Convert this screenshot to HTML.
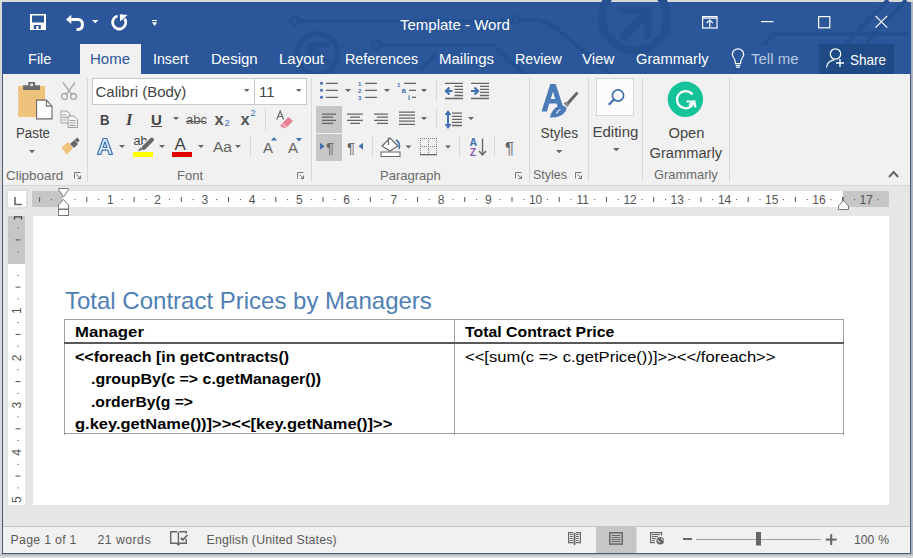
<!DOCTYPE html>
<html><head><meta charset="utf-8">
<style>
*{margin:0;padding:0;box-sizing:border-box}
html,body{width:913px;height:558px;overflow:hidden;background:#d8d8d8;font-family:"Liberation Sans",sans-serif}
.a{position:absolute}
.t{position:absolute;white-space:nowrap;line-height:1;transform-origin:0 0}
svg{position:absolute;overflow:visible}
</style></head><body>
<!-- window -->
<div class="a" style="left:911px;top:2px;width:2px;height:552px;background:linear-gradient(90deg,#a4afc2,#b6b9be)"></div>
<div class="a" style="left:0;top:554px;width:913px;height:4px;background:linear-gradient(#aeb0b2,#c6c8c8 35%,#d8dad8 70%,#e0e2e0)"></div>
<div class="a" style="left:2px;top:2px;width:909px;height:552px;background:#e6e6e6;border:1px solid #485a7a;border-top:none"></div>
<!-- title bar + tabs -->
<div class="a" id="tb" style="left:2px;top:2px;width:909px;height:72px;background:#2b579a;overflow:hidden"></div>
<!-- ribbon -->
<div class="a" style="left:3px;top:74px;width:907px;height:112px;background:#f1f1f1;border-bottom:1px solid #d5d5d5"></div>
<!-- status bar -->
<div class="a" style="left:3px;top:526px;width:907px;height:27px;background:#f1f1f1;border-top:1px solid #c6c6c6"></div>
<!-- page -->
<div class="a" style="left:33px;top:216px;width:856px;height:289px;background:#fff"></div>

<div id="title">
<svg style="left:0;top:0;overflow:hidden" width="913" height="74" viewBox="0 0 913 74">
 <g fill="none" stroke="#24508f" stroke-width="4">
  <circle cx="294.9" cy="20.9" r="4" stroke-width="3"/>
  <path d="M299 20.9H512"/>
  <circle cx="515.7" cy="19.8" r="3.5" stroke-width="3"/>
  <path d="M519 19.8H533Q546 20 558 30L604 68L612 76"/>
  <circle cx="376.4" cy="44.9" r="4" stroke-width="3"/>
  <path d="M380.5 44.9H493L526 76"/>
  <path d="M420 70L436 53"/>
  <circle cx="317.7" cy="54" r="20.5" stroke-width="5"/>
  <path d="M310 66V45H330M310 45L328 63" stroke-width="5"/>
  <circle cx="634.6" cy="17.8" r="32.8" stroke-width="8"/>
  <path d="M622 38L646 14" stroke-width="8"/>
  <path d="M619.7 10.8H648V38.8" stroke-width="7"/>
  <path d="M764 45L773 33.8H908M846.5 43L888 0M866 43L906 0"/>
 </g>
</svg>
<!-- save -->
<svg style="left:30px;top:14px" width="16" height="16" viewBox="0 0 16 16">
 <path fill="#fff" fill-rule="evenodd" d="M0 0H16V16H0Z M2 1.5V8.5H14V1.5Z M3.8 11V15H6.3V12H8.5V15H10.8V11Z"/>
</svg>
<!-- undo -->
<svg style="left:64px;top:13px" width="24" height="18" viewBox="0 0 24 18">
 <path d="M3.5 6.4H14.3A5.2 5.2 0 0 1 14.3 16.6H12.5" fill="none" stroke="#fff" stroke-width="3"/>
 <path d="M2 6.4L7.3 1.8V11Z" fill="#fff"/>
</svg>
<svg style="left:92px;top:20px" width="7" height="4" viewBox="0 0 7 4"><path d="M0 0H6.5L3.25 3.2Z" fill="#fff"/></svg>
<!-- redo -->
<svg style="left:108px;top:12px" width="22" height="22" viewBox="0 0 22 22">
 <path d="M9.49 4.02A6.6 6.6 0 1 0 16.61 6.61" fill="none" stroke="#fff" stroke-width="2.8"/>
 <path d="M11.8 2.3L19.6 3.1L12.2 9.5Z" fill="#fff"/>
</svg>
<!-- customize -->
<svg style="left:152px;top:20px" width="6" height="7" viewBox="0 0 6 7"><rect x="0" y="0" width="5" height="1" fill="#fff"/><path d="M0 2.2H5.2L2.6 6Z" fill="#fff"/></svg>
<div class="t" style="left:400px;top:17px;font-size:15px;color:#fff">Template - Word</div>
<!-- ribbon display options -->
<svg style="left:702px;top:16px" width="16" height="13" viewBox="0 0 16 13">
 <g fill="none" stroke="#fff" stroke-width="1.2"><rect x="0.6" y="0.6" width="14.4" height="11.4"/><path d="M0.6 2.2H15M7.8 4.5V11.5M4.6 7.2L7.8 4L11 7.2"/></g>
</svg>
<svg style="left:761px;top:21px" width="13" height="2"><path d="M0 0.6H12.5" stroke="#fff" stroke-width="1.2"/></svg>
<svg style="left:818px;top:16px" width="13" height="13"><rect x="0.6" y="0.6" width="11.2" height="11.2" fill="none" stroke="#fff" stroke-width="1.2"/></svg>
<svg style="left:875px;top:15px" width="14" height="14"><path d="M0.5 0.8L12.2 12.6M12.2 0.8L0.5 12.6" stroke="#fff" stroke-width="1.2"/></svg>
</div>

<div id="tabs">
<div class="a" style="left:80px;top:44px;width:61px;height:31px;background:#f1f1f1"></div>
<div class="t" style="left:28px;top:51.1px;font-size:15px;transform:scaleX(0.97);color:#fff">File</div>
<div class="t" style="left:90px;top:51.1px;font-size:15px;color:#2b579a">Home</div>
<div class="t" style="left:153px;top:51.1px;font-size:15px;transform:scaleX(0.946);color:#fff">Insert</div>
<div class="t" style="left:211px;top:51.1px;font-size:15px;color:#fff">Design</div>
<div class="t" style="left:279px;top:51.1px;font-size:15px;color:#fff">Layout</div>
<div class="t" style="left:345px;top:51.1px;font-size:15px;transform:scaleX(0.954);color:#fff">References</div>
<div class="t" style="left:439px;top:51.1px;font-size:15px;color:#fff">Mailings</div>
<div class="t" style="left:515px;top:51.1px;font-size:15px;transform:scaleX(0.95);color:#fff">Review</div>
<div class="t" style="left:582px;top:51.1px;font-size:15px;color:#fff">View</div>
<div class="t" style="left:636px;top:51.1px;font-size:15px;transform:scaleX(0.977);color:#fff">Grammarly</div>
<div class="t" style="left:751px;top:51.1px;font-size:15px;color:#b9c9e1">Tell me</div>
<div class="a" style="left:819px;top:44px;width:75px;height:30px;background:#1f4a85"></div>
<div class="t" style="left:849.5px;top:52px;font-size:15px;transform:scaleX(0.9);color:#fff">Share</div>
<svg style="left:824px;top:46px" width="24" height="24" viewBox="824 46 24 24">
 <circle cx="835.5" cy="54" r="5.2" fill="none" stroke="#fff" stroke-width="1.3"/>
 <path d="M826.5 67.5Q827.5 60.5 834.5 59.8" fill="none" stroke="#fff" stroke-width="1.3"/>
 <path d="M840 59V67M836 63H844" stroke="#fff" stroke-width="1.3"/>
</svg>
<svg style="left:731px;top:50px" width="15" height="19" viewBox="731 50 15 19">
 <path d="M735.5 63.5Q735.5 60 733.5 57.5Q732.3 55.8 732.3 54.5A5.7 5.7 0 0 1 743.7 54.5Q743.7 55.8 742.5 57.5Q740.5 60 740.5 63.5Z" fill="none" stroke="#fff" stroke-width="1.2"/>
 <path d="M735.5 65.3H740.5M736 67.2H740" stroke="#fff" stroke-width="1.2"/>
</svg>
</div>


<div id="ribbon">
<!-- separators -->
<div class="a" style="left:87px;top:78px;width:1px;height:104px;background:#d8d8d8"></div>
<div class="a" style="left:311px;top:78px;width:1px;height:104px;background:#d8d8d8"></div>
<div class="a" style="left:529px;top:78px;width:1px;height:104px;background:#d8d8d8"></div>
<div class="a" style="left:588px;top:78px;width:1px;height:104px;background:#d8d8d8"></div>
<div class="a" style="left:642px;top:78px;width:1px;height:104px;background:#d8d8d8"></div>
<div class="a" style="left:729px;top:78px;width:1px;height:104px;background:#d8d8d8"></div>
<!-- group labels -->
<div class="t" style="left:6px;top:169px;font-size:13.4px;color:#6a6a6a">Clipboard</div>
<div class="t" style="left:177px;top:169px;font-size:13px;color:#6a6a6a">Font</div>
<div class="t" style="left:380px;top:169px;font-size:13px;color:#6a6a6a">Paragraph</div>
<div class="t" style="left:533px;top:169px;font-size:12.5px;color:#6a6a6a">Styles</div>
<div class="t" style="left:654px;top:169px;font-size:12.9px;color:#6a6a6a">Grammarly</div>
<!-- launchers -->
<svg style="left:74px;top:172px" width="8" height="7" viewBox="0 0 8 7"><g fill="none" stroke="#777" stroke-width="1"><path d="M0.5 6.5V0.5H6.5"/><path d="M2.5 2.5L6.5 6.5M3.5 6.5H6.5V3.5"/></g></svg>
<svg style="left:297px;top:172px" width="8" height="7" viewBox="0 0 8 7"><g fill="none" stroke="#777" stroke-width="1"><path d="M0.5 6.5V0.5H6.5"/><path d="M2.5 2.5L6.5 6.5M3.5 6.5H6.5V3.5"/></g></svg>
<svg style="left:515px;top:172px" width="8" height="7" viewBox="0 0 8 7"><g fill="none" stroke="#777" stroke-width="1"><path d="M0.5 6.5V0.5H6.5"/><path d="M2.5 2.5L6.5 6.5M3.5 6.5H6.5V3.5"/></g></svg>
<svg style="left:575px;top:172px" width="8" height="7" viewBox="0 0 8 7"><g fill="none" stroke="#777" stroke-width="1"><path d="M0.5 6.5V0.5H6.5"/><path d="M2.5 2.5L6.5 6.5M3.5 6.5H6.5V3.5"/></g></svg>
<svg style="left:888px;top:170px" width="12" height="8" viewBox="0 0 12 8"><path d="M1 7L5.6 2L10.2 7" fill="none" stroke="#666" stroke-width="2"/></svg>

<!-- Clipboard -->
<svg style="left:17px;top:81px" width="36" height="39" viewBox="0 0 36 39">
 <path d="M1.2 5H28V36H1.2Z" fill="#eec27a"/>
 <path d="M6 4.3H23V9H6Z" fill="#6b6b6b"/>
 <path d="M11.3 1H18.1V5H11.3Z" fill="#6b6b6b"/>
 <rect x="13.3" y="2.6" width="2.6" height="2.6" fill="#f1f1f1"/>
 <path d="M19.6 19.1H29.4L35 25.1V37.9H19.6Z" fill="#fff" stroke="#6b6b6b" stroke-width="1.1"/>
 <path d="M29.4 19.1V25.1H35" fill="none" stroke="#6b6b6b" stroke-width="1.1"/>
</svg>
<div class="t" style="left:15.5px;top:126px;font-size:14px;transform:scaleX(0.95);color:#444">Paste</div>
<svg style="left:29px;top:150px" width="7" height="4"><path d="M0 0H6L3 3.2Z" fill="#666"/></svg>
<!-- cut -->
<svg style="left:60px;top:82px" width="18" height="19" viewBox="0 0 18 19">
 <g fill="none" stroke="#a6a6a6" stroke-width="1.3"><path d="M3 0.5L12 12.8M15 0.5L6 12.8"/><circle cx="4.5" cy="14.4" r="2.9"/><circle cx="13.5" cy="14.4" r="2.9"/></g>
</svg>
<!-- copy -->
<svg style="left:60px;top:110px" width="19" height="19" viewBox="0 0 19 19">
 <g fill="#f1f1f1" stroke="#a0a0a0" stroke-width="1"><path d="M1 1H7L10 4V13H1Z"/><path d="M8 6H14L17.5 9.5V17.5H8Z"/></g>
 <g stroke="#a0a0a0" stroke-width="1"><path d="M2.5 5H6M2.5 7.5H7.5M2.5 10H6.5M9.5 10.5H15.5M9.5 13H15.5M9.5 15.5H15.5"/></g>
</svg>
<!-- format painter -->
<svg style="left:61px;top:138px" width="19" height="18" viewBox="0 0 19 18">
 <path d="M0.5 9.5L7 4L12 10.5L5.5 16.5Z" fill="#eec27a"/>
 <path d="M9 6L13.5 2L17 6L13 10Z" fill="#666"/>
 <path d="M13.6 1.8L16.4 -0.6L18.6 2.6L16.6 4.6Z" fill="#666"/>
</svg>

<!-- Font group -->
<div class="a" style="left:92px;top:78px;width:215px;height:27px;background:#fff;border:1px solid #c8c8c8"></div>
<div class="a" style="left:254px;top:78px;width:1px;height:27px;background:#c8c8c8"></div>
<div class="t" style="left:95.5px;top:84px;font-size:15px;color:#444">Calibri (Body)</div>
<div class="t" style="left:259px;top:84px;font-size:15px;color:#444">11</div>
<svg style="left:244px;top:89px" width="6" height="4"><path d="M0 0H5.5L2.75 3Z" fill="#666"/></svg>
<svg style="left:296px;top:89px" width="6" height="4"><path d="M0 0H5.5L2.75 3Z" fill="#666"/></svg>
<div class="t" style="left:99.5px;top:112px;font-size:15.5px;transform:scaleX(0.85);font-weight:bold;color:#444">B</div>
<div class="t" style="left:126px;top:111.5px;font-size:16.5px;font-style:italic;font-family:'Liberation Serif',serif;font-weight:bold;color:#444">I</div>
<div class="t" style="left:151px;top:112px;font-size:15px;font-weight:bold;color:#444">U</div>
<div class="a" style="left:151px;top:126px;width:11px;height:1.3px;background:#444"></div>
<svg style="left:173px;top:117px" width="7" height="4"><path d="M0 0H6L3 3Z" fill="#666"/></svg>
<div class="t" style="left:186px;top:113px;font-size:13px;color:#555">abc</div>
<div class="a" style="left:186px;top:121px;width:20px;height:1.2px;background:#555"></div>
<div class="t" style="left:214.5px;top:110.5px;font-size:16.5px;font-weight:bold;color:#555">x</div>
<div class="t" style="left:224.5px;top:119px;font-size:9px;color:#3f70b0">2</div>
<div class="t" style="left:240.5px;top:110.5px;font-size:16.5px;font-weight:bold;color:#555">x</div>
<div class="t" style="left:250.5px;top:109px;font-size:9px;color:#3f70b0">2</div>
<div class="a" style="left:265px;top:108px;width:1px;height:22px;background:#d8d8d8"></div>
<svg style="left:276px;top:110px" width="18" height="19" viewBox="0 0 18 19">
 <path d="M0.8 9.5L4.2 1L7.6 9.5M2 6.5H6.4" fill="none" stroke="#666" stroke-width="1.2"/>
 <path d="M6.5 13L12.5 7L17 11L11 17Z" fill="#e77e92"/>
 <path d="M4 16L6.5 13L11 17L9 18.6Z" fill="#e77e92"/>
 <path d="M5.8 13.6L10.6 17.6" stroke="#f1f1f1" stroke-width="1"/>
</svg>
<!-- row 3 -->
<svg style="left:96px;top:137px" width="18" height="19" viewBox="0 0 18 19">
 <path d="M1.5 17.3L7.2 1.5H10.8L16.5 17.3H13.2L11.8 13.2H6.2L4.8 17.3Z M7.1 10.4H10.9L9 4.8Z" fill="#e4eef9" stroke="#3b73b9" stroke-width="1.2" stroke-linejoin="round"/>
</svg>
<svg style="left:119px;top:145px" width="7" height="4"><path d="M0 0H6L3 3Z" fill="#666"/></svg>
<div class="t" style="left:133.5px;top:135px;font-size:12.5px;color:#444">ab</div>
<svg style="left:136px;top:138px" width="17" height="15" viewBox="136 138 17 15"><path d="M143.5 148L151.8 139.8" stroke="#f1f1f1" stroke-width="6.5"/><path d="M143.8 147.7L151.8 139.8" stroke="#666" stroke-width="4.2" stroke-linecap="round"/><path d="M137.5 151.5L140.5 147.5L142.8 149.6Z" fill="#666"/></svg>
<div class="a" style="left:133px;top:152px;width:20px;height:5px;background:#ffff00"></div>
<svg style="left:159px;top:145px" width="7" height="4"><path d="M0 0H6L3 3Z" fill="#666"/></svg>
<div class="t" style="left:174.5px;top:136px;font-size:17px;color:#444">A</div>
<div class="a" style="left:172px;top:152px;width:20px;height:5px;background:#e00000"></div>
<svg style="left:198px;top:145px" width="7" height="4"><path d="M0 0H6L3 3Z" fill="#666"/></svg>
<div class="t" style="left:213px;top:139px;font-size:15.5px;color:#666">Aa</div>
<svg style="left:235px;top:145px" width="7" height="4"><path d="M0 0H6L3 3Z" fill="#666"/></svg>
<div class="a" style="left:250px;top:136px;width:1px;height:22px;background:#d8d8d8"></div>
<div class="t" style="left:263px;top:140px;font-size:15px;color:#666">A</div>
<svg style="left:271px;top:137px" width="7" height="4"><path d="M0 3.5L3 0L6 3.5Z" fill="#3f70b0"/></svg>
<div class="t" style="left:288px;top:140px;font-size:15px;color:#666">A</div>
<svg style="left:296px;top:138px" width="7" height="4"><path d="M0 0H6L3 3.5Z" fill="#3f70b0"/></svg>

<!-- Paragraph group -->
<svg style="left:316px;top:80px" width="200" height="80" viewBox="316 80 200 80">
 <g fill="#3f70b0"><circle cx="321.5" cy="83.3" r="1.5"/><circle cx="321.5" cy="90.3" r="1.5"/><circle cx="321.5" cy="97.3" r="1.5"/></g>
 <g stroke="#666" stroke-width="1.3"><path d="M326 83.3H338M326 90.3H338M326 97.3H338"/>
 <path d="M365 83.3H377M365 90.3H377M365 97.3H377"/>
 <path d="M404 83.3H416M409 90.3H416M412 97.3H416"/></g>
 <g fill="#3f70b0" font-family="Liberation Sans" font-size="6" font-weight="bold"><text x="358" y="86">1</text><text x="358" y="93">2</text><text x="358" y="100">3</text>
 <text x="397" y="87">1</text><text x="401.5" y="93" font-size="8">a</text><text x="408" y="100" font-size="7">i</text></g>
 <g fill="#666"><path d="M345 89H351L348 92Z M384 89H390L387 92Z M421 89H427L424 92Z"/></g>
 <!-- indent -->
 <g stroke="#666" stroke-width="1.3"><path d="M445 83.4H463M454.5 86.4H463M454.5 89.4H463M454.5 92.4H463M454.5 95.5H463M445 98.5H463"/>
 <path d="M471 83.4H489M480 86.4H489M480 89.4H489M480 92.4H489M480 95.5H489M471 98.5H489"/></g>
 <g fill="none" stroke="#3f70b0" stroke-width="2.2"><path d="M452.5 91H446.5M449.5 87.5L446 91L449.5 94.5"/><path d="M471 91H477.5M474.5 87.5L478 91L474.5 94.5"/></g>
 <!-- align -->
 <rect x="316" y="106" width="26" height="27" fill="#c6c6c6"/>
 <rect x="316" y="134" width="26" height="27" fill="#c6c6c6"/>
 <g stroke="#666" stroke-width="1.3"><path d="M322 114.1H336M322 117.1H333M322 120.3H336M322 123.3H333"/>
 <path d="M347 114.1H363M350 117.1H360M347 120.3H363M350 123.3H360"/>
 <path d="M374 114.1H388M377 117.1H388M374 120.3H388M377 123.3H388"/>
 <path d="M399 112.1H415M399 115.1H415M399 118.1H415M399 121.1H415M399 124.3H415"/>
 <path d="M452 113.2H462M452 116.3H462M452 119.4H462M452 122.3H462M452 125.5H462"/></g>
 <g fill="#666"><path d="M421 117H427L424 120Z M468 117H474L471 120Z"/></g>
 <g fill="none" stroke="#3f70b0" stroke-width="2"><path d="M448 112V127"/></g>
 <g fill="#3f70b0"><path d="M444.5 115L448 110L451.5 115Z M444.5 124L448 129L451.5 124Z"/></g>
 <!-- row3 -->
 <path d="M320 142.8L324.5 146.3L320 149.8Z" fill="#3f70b0"/>
 <path d="M363 142.8L358.5 146.3L363 149.8Z" fill="#3f70b0"/>
 <g fill="#666" font-family="Liberation Sans" font-size="15"><text x="326" y="152.5">¶</text><text x="347" y="152.5">¶</text><text x="505" y="154" font-size="17">¶</text></g>
 <rect x="372" y="136" width="1" height="21" fill="#d8d8d8"/>
 <rect x="436" y="80" width="1" height="21" fill="#d8d8d8"/>
 <rect x="436" y="108" width="1" height="21" fill="#d8d8d8"/>
 <rect x="459" y="136" width="1" height="21" fill="#d8d8d8"/>
 <rect x="494" y="136" width="1" height="21" fill="#d8d8d8"/>
 <!-- shading -->
 <path d="M382 146L390 138L398 146L390 151Z" fill="#fff" stroke="#666" stroke-width="1.2"/>
 <path d="M388.5 137.5V145" stroke="#666" stroke-width="1.2"/>
 <path d="M396 140Q401 143 399 149" fill="none" stroke="#3f70b0" stroke-width="1.6"/>
 <rect x="381" y="152" width="19" height="4.5" fill="#fff" stroke="#666" stroke-width="1"/>
 <g fill="#666"><path d="M405.5 145.5H411.5L408.5 148.5Z M445 145.5H451L448 148.5Z"/></g>
 <!-- borders -->
 <g fill="#777"><rect x="420" y="138" width="1" height="1"/><rect x="420" y="146" width="1" height="1"/><rect x="422" y="138" width="1" height="1"/><rect x="422" y="146" width="1" height="1"/><rect x="424" y="138" width="1" height="1"/><rect x="424" y="146" width="1" height="1"/><rect x="426" y="138" width="1" height="1"/><rect x="426" y="146" width="1" height="1"/><rect x="428" y="138" width="1" height="1"/><rect x="428" y="146" width="1" height="1"/><rect x="430" y="138" width="1" height="1"/><rect x="430" y="146" width="1" height="1"/><rect x="432" y="138" width="1" height="1"/><rect x="432" y="146" width="1" height="1"/><rect x="434" y="138" width="1" height="1"/><rect x="434" y="146" width="1" height="1"/><rect x="436" y="138" width="1" height="1"/><rect x="436" y="146" width="1" height="1"/><rect x="420" y="140" width="1" height="1"/><rect x="428" y="140" width="1" height="1"/><rect x="436" y="140" width="1" height="1"/><rect x="420" y="142" width="1" height="1"/><rect x="428" y="142" width="1" height="1"/><rect x="436" y="142" width="1" height="1"/><rect x="420" y="144" width="1" height="1"/><rect x="428" y="144" width="1" height="1"/><rect x="436" y="144" width="1" height="1"/><rect x="420" y="146" width="1" height="1"/><rect x="428" y="146" width="1" height="1"/><rect x="436" y="146" width="1" height="1"/><rect x="420" y="148" width="1" height="1"/><rect x="428" y="148" width="1" height="1"/><rect x="436" y="148" width="1" height="1"/><rect x="420" y="150" width="1" height="1"/><rect x="428" y="150" width="1" height="1"/><rect x="436" y="150" width="1" height="1"/><rect x="420" y="152" width="1" height="1"/><rect x="428" y="152" width="1" height="1"/><rect x="436" y="152" width="1" height="1"/></g>
 <rect x="420" y="154" width="17" height="1.3" fill="#666"/>
 <!-- sort -->
 <g font-family="Liberation Sans" font-size="10.5" font-weight="bold"><text x="469.5" y="146.2" fill="#3f70b0">A</text><text x="469.8" y="155.8" fill="#8b5bb8">Z</text></g>
 <path d="M482.5 138.5V155M479 151L482.5 155L486 151" fill="none" stroke="#666" stroke-width="1.4"/>
</svg>
<!-- Styles -->
<svg style="left:540px;top:82px" width="40" height="37" viewBox="540 82 40 37">
 <path d="M541.5 111.5L550.3 84H555.7L563 106.5L558.5 108.8L556.6 103.5H549.2L547 111.5Z M550.7 99H555.3L553 91.5Z" fill="#4a7ab8"/>
 <path d="M566.5 102.5L576.5 91.5L578.5 93.5L568.7 104.8Z" fill="#666"/>
 <path d="M563.5 103.2L566.5 101.8L569.5 104.8L567.2 107Z" fill="#888"/>
 <path d="M550 117.5Q551.5 109 558.5 106Q563.5 104.5 566.5 107.8Q566.5 113 560 116Q555 117.8 550 117.5Z" fill="#4a7ab8"/>
 <path d="M556.5 113.5Q557.5 110.5 560.5 109.5" fill="none" stroke="#f1f1f1" stroke-width="1.3"/>
</svg>
<div class="t" style="left:540.5px;top:127px;font-size:13.8px;color:#444">Styles</div>
<svg style="left:555.5px;top:149.5px" width="7" height="4"><path d="M0 0H6.5L3.25 3.2Z" fill="#666"/></svg>
<!-- Editing -->
<div class="a" style="left:596px;top:78px;width:38px;height:38px;background:#fcfcfc;border:1px solid #d4d4d4"></div>
<svg style="left:606px;top:86px" width="20" height="20" viewBox="606 86 20 20"><circle cx="618" cy="95.5" r="5.6" fill="none" stroke="#3f70b0" stroke-width="1.7"/><path d="M614 99.5L608.8 104.7" stroke="#3f70b0" stroke-width="2.2"/></svg>
<div class="t" style="left:592.5px;top:123.5px;font-size:15px;color:#444">Editing</div>
<svg style="left:613px;top:147.5px" width="7" height="4"><path d="M0 0H6.5L3.25 3.2Z" fill="#666"/></svg>
<!-- Grammarly -->
<svg style="left:667px;top:81px" width="37" height="37" viewBox="0 0 37 37">
 <circle cx="18.4" cy="18.3" r="17.7" fill="#15c39a"/>
 <path d="M25.5 13.5A8.6 8.6 0 1 0 27 20.5H19.5" fill="none" stroke="#fff" stroke-width="2.2"/>
 <path d="M22 24L27.5 21L28.5 26.5" fill="none" stroke="#fff" stroke-width="2"/>
</svg>
<div class="t" style="left:668.5px;top:126px;font-size:14.7px;color:#444">Open</div>
<div class="t" style="left:649.5px;top:146px;font-size:14.7px;color:#444">Grammarly</div>
</div>

<div id="ruler">
<div class="a" style="left:6px;top:189px;width:22px;height:20px;background:#fff;border:2.5px solid #dedede"></div>
<svg style="left:14px;top:197px" width="9" height="9"><path d="M1 0V7.5H8" fill="none" stroke="#666" stroke-width="1.6"/></svg>
<div class="a" style="left:32px;top:191px;width:857px;height:16px;background:#fff"></div>
<div class="a" style="left:32px;top:191px;width:31px;height:16px;background:#c6c6c6"></div>
<div class="a" style="left:843px;top:191px;width:46px;height:16px;background:#c6c6c6"></div>
<svg style="left:0;top:186px" width="913" height="30" viewBox="0 186 913 30">
<g fill="#555">
<rect x="39.1" y="197" width="1" height="5"/>
<rect x="50.9" y="199" width="1" height="1.2"/>
<rect x="74.5" y="199" width="1" height="1.2"/>
<rect x="86.3" y="197" width="1" height="5"/>
<rect x="98.1" y="199" width="1" height="1.2"/>
<rect x="121.8" y="199" width="1" height="1.2"/>
<rect x="133.6" y="197" width="1" height="5"/>
<rect x="145.4" y="199" width="1" height="1.2"/>
<rect x="169.0" y="199" width="1" height="1.2"/>
<rect x="180.8" y="197" width="1" height="5"/>
<rect x="192.6" y="199" width="1" height="1.2"/>
<rect x="216.2" y="199" width="1" height="1.2"/>
<rect x="228.0" y="197" width="1" height="5"/>
<rect x="239.9" y="199" width="1" height="1.2"/>
<rect x="263.5" y="199" width="1" height="1.2"/>
<rect x="275.3" y="197" width="1" height="5"/>
<rect x="287.1" y="199" width="1" height="1.2"/>
<rect x="310.7" y="199" width="1" height="1.2"/>
<rect x="322.5" y="197" width="1" height="5"/>
<rect x="334.3" y="199" width="1" height="1.2"/>
<rect x="357.9" y="199" width="1" height="1.2"/>
<rect x="369.8" y="197" width="1" height="5"/>
<rect x="381.6" y="199" width="1" height="1.2"/>
<rect x="405.2" y="199" width="1" height="1.2"/>
<rect x="417.0" y="197" width="1" height="5"/>
<rect x="428.8" y="199" width="1" height="1.2"/>
<rect x="452.4" y="199" width="1" height="1.2"/>
<rect x="464.2" y="197" width="1" height="5"/>
<rect x="476.1" y="199" width="1" height="1.2"/>
<rect x="499.7" y="199" width="1" height="1.2"/>
<rect x="511.5" y="197" width="1" height="5"/>
<rect x="523.3" y="199" width="1" height="1.2"/>
<rect x="546.9" y="199" width="1" height="1.2"/>
<rect x="558.7" y="197" width="1" height="5"/>
<rect x="570.5" y="199" width="1" height="1.2"/>
<rect x="594.2" y="199" width="1" height="1.2"/>
<rect x="606.0" y="197" width="1" height="5"/>
<rect x="617.8" y="199" width="1" height="1.2"/>
<rect x="641.4" y="199" width="1" height="1.2"/>
<rect x="653.2" y="197" width="1" height="5"/>
<rect x="665.0" y="199" width="1" height="1.2"/>
<rect x="688.6" y="199" width="1" height="1.2"/>
<rect x="700.4" y="197" width="1" height="5"/>
<rect x="712.3" y="199" width="1" height="1.2"/>
<rect x="735.9" y="199" width="1" height="1.2"/>
<rect x="747.7" y="197" width="1" height="5"/>
<rect x="759.5" y="199" width="1" height="1.2"/>
<rect x="783.1" y="199" width="1" height="1.2"/>
<rect x="794.9" y="197" width="1" height="5"/>
<rect x="806.7" y="199" width="1" height="1.2"/>
<rect x="830.4" y="199" width="1" height="1.2"/>
<rect x="842.2" y="197" width="1" height="5"/>
<rect x="854.0" y="199" width="1" height="1.2"/>
<rect x="877.6" y="199" width="1" height="1.2"/>
</g>
<g fill="#555" font-family="Liberation Sans" font-size="12" text-anchor="middle">
<text x="110.4" y="203.5">1</text>
<text x="157.7" y="203.5">2</text>
<text x="204.9" y="203.5">3</text>
<text x="252.2" y="203.5">4</text>
<text x="299.4" y="203.5">5</text>
<text x="346.6" y="203.5">6</text>
<text x="393.9" y="203.5">7</text>
<text x="441.1" y="203.5">8</text>
<text x="488.4" y="203.5">9</text>
<text x="535.6" y="203.5">10</text>
<text x="582.8" y="203.5">11</text>
<text x="630.1" y="203.5">12</text>
<text x="677.3" y="203.5">13</text>
<text x="724.6" y="203.5">14</text>
<text x="771.8" y="203.5">15</text>
<text x="819.0" y="203.5">16</text>
<text x="866.3" y="203.5">17</text>
</g>
<g fill="#fff" stroke="#777" stroke-width="1"><path d="M58.5 188.5H68.5V189.5L63.5 197L58.5 189.5Z"/><path d="M63.5 199.5L68.5 205V209H58.5V205Z"/><rect x="58.5" y="209.5" width="10" height="6"/>
<path d="M843.5 200.5L848.5 206V209.5H838.5V206Z"/></g>
<rect x="842.5" y="197" width="1" height="3.5" fill="#555"/>
</svg>
<div class="a" style="left:8px;top:216px;width:17px;height:289px;background:#fff"></div>
<div class="a" style="left:8px;top:216px;width:17px;height:47.5px;background:#c6c6c6"></div>
<svg style="left:0;top:216px" width="33" height="289" viewBox="0 216 33 289">
<g fill="#555">
<rect x="17.5" y="227.6" width="1.2" height="1"/>
<rect x="15.5" y="239.4" width="5" height="1"/>
<rect x="17.5" y="251.2" width="1.2" height="1"/>
<rect x="17.5" y="274.8" width="1.2" height="1"/>
<rect x="15.5" y="286.6" width="5" height="1"/>
<rect x="17.5" y="298.4" width="1.2" height="1"/>
<rect x="17.5" y="322.1" width="1.2" height="1"/>
<rect x="15.5" y="333.9" width="5" height="1"/>
<rect x="17.5" y="345.7" width="1.2" height="1"/>
<rect x="17.5" y="369.3" width="1.2" height="1"/>
<rect x="15.5" y="381.1" width="5" height="1"/>
<rect x="17.5" y="392.9" width="1.2" height="1"/>
<rect x="17.5" y="416.5" width="1.2" height="1"/>
<rect x="15.5" y="428.3" width="5" height="1"/>
<rect x="17.5" y="440.1" width="1.2" height="1"/>
<rect x="17.5" y="463.8" width="1.2" height="1"/>
<rect x="15.5" y="475.6" width="5" height="1"/>
<rect x="17.5" y="487.4" width="1.2" height="1"/>
<path d="M14.5 219.5V216.8H21.5V219.5" fill="none" stroke="#444" stroke-width="1.2"/>
</g><g fill="#555" font-family="Liberation Sans" font-size="12" text-anchor="middle">
<text x="0" y="0" transform="translate(21 310.7) rotate(-90)">1</text>
<text x="0" y="0" transform="translate(21 358.0) rotate(-90)">2</text>
<text x="0" y="0" transform="translate(21 405.2) rotate(-90)">3</text>
<text x="0" y="0" transform="translate(21 452.5) rotate(-90)">4</text>
<text x="0" y="0" transform="translate(21 499.7) rotate(-90)">5</text>
</g></svg>
</div>
<div id="doc">
<div class="t" id="h1" style="left:65px;top:289px;font-size:24px;color:#4f80b5">Total Contract Prices by Managers</div>
<div class="a" style="left:64px;top:319px;width:780px;height:1px;background:#a0a0a0"></div>
<div class="a" style="left:64px;top:319px;width:1px;height:116px;background:#a0a0a0"></div>
<div class="a" style="left:843px;top:319px;width:1px;height:116px;background:#a0a0a0"></div>
<div class="a" style="left:454px;top:319px;width:1px;height:116px;background:#a0a0a0"></div>
<div class="a" style="left:64px;top:433px;width:780px;height:1px;background:#a0a0a0"></div>
<div class="a" style="left:64px;top:342px;width:780px;height:2px;background:#595959"></div>
<div class="t" id="d1" style="left:74.5px;top:324px;font-size:15px;transform:scaleX(1.117);font-weight:bold;color:#000">Manager</div>
<div class="t" id="d2" style="left:464.5px;top:324px;font-size:15px;transform:scaleX(1.056);font-weight:bold;color:#000">Total Contract Price</div>
<div class="t" id="d3" style="left:74.5px;top:348.5px;font-size:15px;transform:scaleX(1.066);font-weight:bold;color:#000">&lt;&lt;foreach [in getContracts()</div>
<div class="t" id="d4" style="left:91px;top:371px;font-size:15px;transform:scaleX(1.062);font-weight:bold;color:#000">.groupBy(c =&gt; c.getManager())</div>
<div class="t" id="d5" style="left:91px;top:393.5px;font-size:15px;transform:scaleX(1.046);font-weight:bold;color:#000">.orderBy(g =&gt;</div>
<div class="t" id="d6" style="left:74.5px;top:416px;font-size:15px;transform:scaleX(1.099);font-weight:bold;color:#000">g.key.getName())]&gt;&gt;&lt;&lt;[key.getName()]&gt;&gt;</div>
<div class="t" id="d7" style="left:464.5px;top:348.5px;font-size:15px;transform:scaleX(1.105);color:#000">&lt;&lt;[sum(c =&gt; c.getPrice())]&gt;&gt;&lt;&lt;/foreach&gt;&gt;</div>
</div>

<!-- status icons -->
<svg style="left:560px;top:526px" width="350" height="27" viewBox="560 526 350 27">
 <rect x="596" y="527" width="40.5" height="26" fill="#c6c6c6"/>
 <g fill="none" stroke="#666" stroke-width="1.2">


 </g>
 <g fill="#666"><rect x="609" y="532" width="14" height="1.5"/><rect x="609" y="543.3" width="14" height="1.5"/><rect x="609" y="532" width="1.5" height="12.8"/><rect x="621.5" y="532" width="1.5" height="12.8"/>
 <rect x="611.5" y="535" width="9" height="1"/><rect x="611.5" y="537" width="9" height="1"/><rect x="611.5" y="539" width="9" height="1"/><rect x="611.5" y="541" width="9" height="1"/></g>
 <g fill="#666">
  <rect x="568" y="532" width="5" height="1.2"/><rect x="576" y="532" width="5" height="1.2"/>
  <rect x="568" y="542" width="5" height="1.2"/><rect x="576" y="542" width="5" height="1.2"/>
  <rect x="568" y="532" width="1.2" height="11.2"/><rect x="579.8" y="532" width="1.2" height="11.2"/>
  <rect x="570" y="534" width="2.8" height="1"/><rect x="570" y="536" width="2.8" height="1"/><rect x="570" y="538" width="2.8" height="1"/><rect x="570" y="540" width="2.8" height="1"/>
  <rect x="576" y="534" width="2.8" height="1"/><rect x="576" y="536" width="2.8" height="1"/><rect x="576" y="538" width="2.8" height="1"/><rect x="576" y="540" width="2.8" height="1"/>
  <rect x="573.6" y="532.8" width="1.8" height="11"/><path d="M573 543.5H576L574.5 545.5Z"/>
  <rect x="650" y="532" width="12" height="1.2"/><rect x="650" y="532" width="1.2" height="11"/><rect x="650" y="542" width="5" height="1.2"/><rect x="661" y="532" width="1.2" height="3.5"/>
  <rect x="652" y="534" width="7.8" height="1.1"/><rect x="652" y="536" width="5.8" height="1.1"/><rect x="652" y="538" width="3.8" height="1.1"/><rect x="652" y="540" width="2.8" height="1.1"/>
 </g>
 <circle cx="660.2" cy="540.8" r="4.6" fill="#f1f1f1"/>
 <circle cx="660.2" cy="540.8" r="3.8" fill="#666"/>
 <path d="M657.5 539.5L660 543M661 538L663.5 541" fill="none" stroke="#f1f1f1" stroke-width="0.9"/>
 <rect x="683" y="538" width="9" height="2" fill="#666"/>
 <rect x="696" y="539" width="125" height="1" fill="#a0a0a0"/>
 <rect x="756" y="532" width="5" height="13.5" fill="#666"/>
 <rect x="825.7" y="538.6" width="11" height="2" fill="#666"/>
 <rect x="830.2" y="534.2" width="2" height="10.8" fill="#666"/>
 <g fill="#555"><path d="M169.8 531.5"/></g>
</svg>
<svg style="left:168px;top:529px" width="24" height="19" viewBox="168 529 24 19">
 <g fill="none" stroke="#666" stroke-width="1.4">
  <path d="M177.5 531.8H170.7V543.3H177.5"/>
  <path d="M179.2 531.8H186.3V533.6M186.3 538.8V543.3H179.2"/>
  <path d="M178.4 532.2V544.5M176.8 543.2L178.4 545L180 543.2"/>
  <path d="M180.8 537.8L182.8 540L187.4 535" stroke-width="1.8"/>
 </g>
</svg>

<div id="status">
<div class="t" style="left:10.5px;top:533.5px;font-size:12.3px;letter-spacing:0.3px;color:#5a5a5a">Page 1 of 1</div>
<div class="t" style="left:97.5px;top:533.5px;font-size:12.3px;letter-spacing:0.45px;color:#5a5a5a">21 words</div>
<div class="t" style="left:206.5px;top:533.5px;font-size:12.3px;letter-spacing:0.2px;color:#5a5a5a">English (United States)</div>
<div class="t" style="left:854px;top:534px;font-size:12.2px;color:#5a5a5a;word-spacing:0.5px">100 %</div>
</div>

</body></html>
